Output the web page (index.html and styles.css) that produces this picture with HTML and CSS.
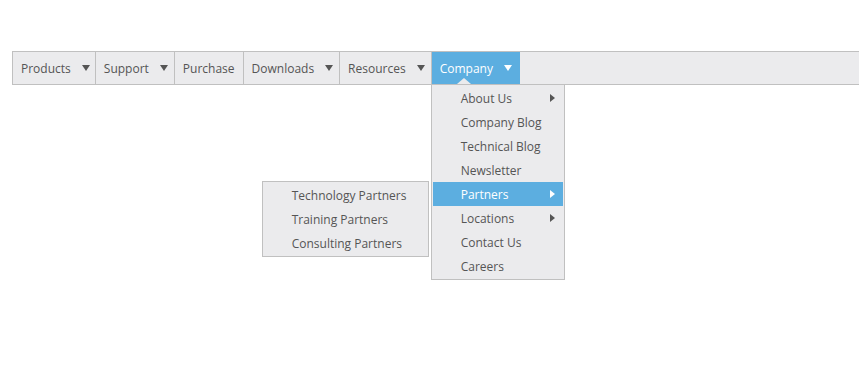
FILE: index.html
```html
<!DOCTYPE html>
<html>
<head>
	<meta charset="utf-8">
	<title>Menu</title>
	<link rel="stylesheet" href="styles.css">
</head>
<body>
	<div class="page">
		<ul class="menu">
			<li class="menu-item first"><a href="#">Products<span class="caret"></span></a></li>
			<li class="menu-item"><a href="#">Support<span class="caret"></span></a></li>
			<li class="menu-item"><a href="#" class="plain">Purchase</a></li>
			<li class="menu-item"><a href="#">Downloads<span class="caret"></span></a></li>
			<li class="menu-item"><a href="#">Resources<span class="caret"></span></a></li>
			<li class="menu-item active">
				<a href="#">Company<span class="caret"></span></a>
				<div class="panel">
					<div class="panel-row"><a href="#">About Us<span class="caret-right"></span></a></div>
					<div class="panel-row"><a href="#">Company Blog</a></div>
					<div class="panel-row"><a href="#">Technical Blog</a></div>
					<div class="panel-row"><a href="#">Newsletter</a></div>
					<div class="panel-row active">
						<a href="#">Partners<span class="caret-right"></span></a>
						<div class="panel side-panel">
							<div class="panel-row"><a href="#">Technology Partners</a></div>
							<div class="panel-row"><a href="#">Training Partners</a></div>
							<div class="panel-row"><a href="#">Consulting Partners</a></div>
						</div>
					</div>
					<div class="panel-row"><a href="#">Locations<span class="caret-right"></span></a></div>
					<div class="panel-row"><a href="#">Contact Us</a></div>
					<div class="panel-row"><a href="#">Careers</a></div>
				</div>
			</li>
		</ul>
	</div>
</body>
</html>
```

FILE: styles.css
```css
*{margin: 0;padding: 0;box-sizing: border-box;}
ul{list-style: none;}
a{text-decoration: none;color: inherit;}
html, body {
	overflow: visible;
}
body {
	background: #ffffff;
	font: 12px "Segoe UI", "Open Sans", sans-serif;
	color: #555555;
}
.page {
	min-height: 385px;
	padding: 51px 0 0 12px;
	overflow: visible;
}
.menu {
	display: flex;
	height: 34px;
	background: #ebebed;
	border: 1px solid #c0c0c0;
	border-right: none;
	overflow: visible;
}
.menu-item {
	position: relative;
	border-right: 1px solid #c0c0c0;
	overflow: visible;
}
.menu-item > a {
	display: flex;
	align-items: center;
	height: 32px;
	padding: 0 6px 0 8px;
}
.menu-item.first > a {
	padding-right: 5px;
}
.menu-item > a.plain {
	padding-right: 8px;
}
.caret {
	margin-left: 11px;
	border-left: 4px solid transparent;
	border-right: 4px solid transparent;
	border-top: 6px solid #555555;
}
.menu-item.active {
	border-right: none;
}
.menu-item.active > a {
	background: #5caee0;
	color: #ffffff;
	padding-right: 8px;
}
.menu-item.active > a .caret {
	border-top-color: #ffffff;
}
/* small notch under the open item */
.menu-item.active > a:after {
	content: "";
	position: absolute;
	left: 25px;
	top: 26px;
	border-left: 7px solid transparent;
	border-right: 7px solid transparent;
	border-bottom: 6px solid #ebebed;
}
.panel {
	position: absolute;
	top: 32px;
	left: -1px;
	width: 134px;
	padding: 1px;
	background: #ebebed;
	border: 1px solid #c0c0c0;
	z-index: 5;
}
.panel-row {
	position: relative;
}
.panel-row > a {
	display: flex;
	align-items: center;
	justify-content: space-between;
	height: 24px;
	padding: 0 8px 0 28px;
	white-space: nowrap;
}
.caret-right {
	border-top: 4px solid transparent;
	border-bottom: 4px solid transparent;
	border-left: 5px solid #555555;
}
.panel-row.active > a {
	background: #5caee0;
	color: #ffffff;
}
.panel-row.active > a .caret-right {
	border-left-color: #ffffff;
}
.side-panel {
	top: -1px;
	left: auto;
	right: calc(100% + 4px);
	width: 167px;
}
```
